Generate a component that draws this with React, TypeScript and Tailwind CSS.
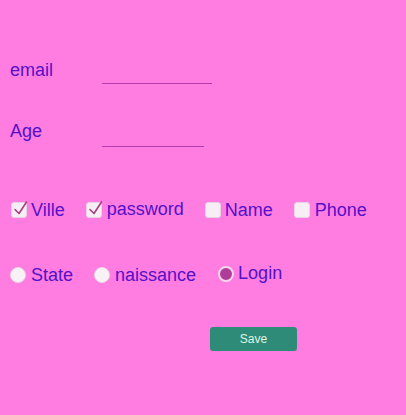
import React from "react";

function Check({ checked }: { checked?: boolean }) {
  return (
    <span className="relative inline-block w-[16px] h-[16px] rounded-[3px] bg-[#f7eef5] border border-[#e6d2e2] shrink-0">
      {checked && (
        <svg className="absolute left-[1px] top-[-3px]" width="15" height="16" viewBox="0 0 15 16">
          <path d="M2 9.5 L6 13.5 L13.5 2" fill="none" stroke="#a3407f" strokeWidth="1.6" strokeLinecap="round" strokeLinejoin="round" />
        </svg>
      )}
    </span>
  );
}

function Radio({ checked }: { checked?: boolean }) {
  return checked ? (
    <span className="inline-block w-[16px] h-[16px] rounded-full bg-[#b03c9a] border-2 border-[#f3d6ec] shrink-0" />
  ) : (
    <span className="inline-block w-[16px] h-[16px] rounded-full bg-[#f8f2f6] border border-[#e8d6e4] shrink-0" />
  );
}

export default function App() {
  return (
    <div className="w-full min-h-[415px] bg-[#ff7de0] font-['Liberation_Sans',Arial,sans-serif] text-[#5510c8] text-[18px] leading-[21px] pt-[60px] pl-[10px]">
      <div className="flex items-start">
        <span className="w-[92px]">email</span>
        <div className="w-[110px] h-[24px] border-b border-[#b23cae]" />
      </div>
      <div className="flex items-start mt-[37px]">
        <span className="w-[92px]">Age</span>
        <div className="w-[102px] h-[26px] border-b border-[#b23cae]" />
      </div>

      <div className="flex items-start mt-[53px] pl-[1px]">
        <label className="flex items-start">
          <span className="mt-[2px]"><Check checked /></span>
          <span className="ml-[4px]">Ville</span>
        </label>
        <label className="flex items-start ml-[21px]">
          <span className="mt-[2px]"><Check checked /></span>
          <span className="ml-[5px] -mt-[1px]">password</span>
        </label>
        <label className="flex items-start ml-[21px]">
          <span className="mt-[2px]"><Check /></span>
          <span className="ml-[4px]">Name</span>
        </label>
        <label className="flex items-start ml-[21px]">
          <span className="mt-[2px]"><Check /></span>
          <span className="ml-[5px]">Phone</span>
        </label>
      </div>

      <div className="flex items-start mt-[42px]">
        <label className="flex items-start">
          <span className="mt-[2px]"><Radio /></span>
          <span className="ml-[5px]">State</span>
        </label>
        <label className="flex items-start ml-[21px]">
          <span className="mt-[2px]"><Radio /></span>
          <span className="ml-[5px]">naissance</span>
        </label>
        <label className="flex items-start ml-[22px]">
          <span className="mt-[1px]"><Radio checked /></span>
          <span className="ml-[4px] -mt-[2px]">Login</span>
        </label>
      </div>

      <div className="mt-[39px] pl-[200px]">
        <button className="w-[87px] h-[24px] rounded-[3px] bg-[#2e8b78] text-[#dff5e6] text-[12px] leading-[24px] font-['Liberation_Sans',Arial,sans-serif]">
          Save
        </button>
      </div>
    </div>
  );
}
